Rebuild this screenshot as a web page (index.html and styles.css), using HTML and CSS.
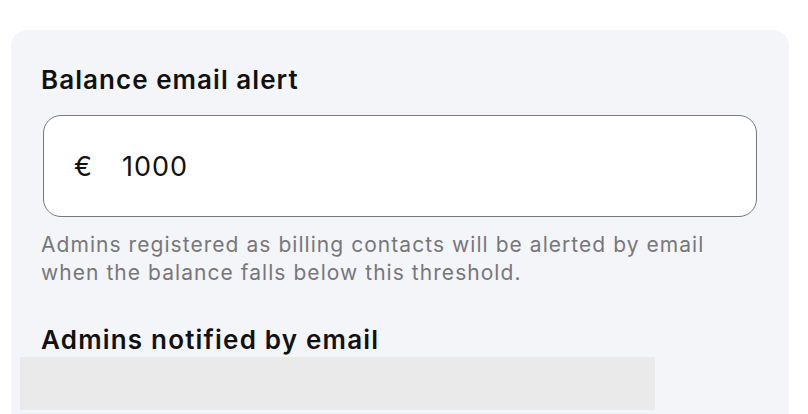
FILE: index.html
```html
<!DOCTYPE html>
<html lang="en">
<head>
<meta charset="utf-8">
<link rel="stylesheet" href="styles.css">
<title>Balance email alert</title>
</head>
<body>
  <section class="card">
    <h2 class="title">Balance email alert</h2>
    <div class="field">
      <span class="currency">€</span>
      <span class="amount">1000</span>
    </div>
    <p class="help">Admins registered as billing contacts will be alerted by email<br>when the balance falls below this threshold.</p>
    <h2 class="title title-admins">Admins notified by email</h2>
    <div class="placeholder"></div>
  </section>
</body>
</html>
```

FILE: styles.css
```css
html, body {
  margin: 0;
  padding: 0;
  background: #ffffff;
  font-family: Inter, "Noto Sans", sans-serif;
  overflow: hidden;
}

.card {
  margin: 30px 0 0 11px;
  width: 778px;
  height: 384px;
  box-sizing: border-box;
  background: #f4f5f9;
  border-radius: 16px 16px 0 0;
  padding: 34px 0 0 30px;
}

.title {
  margin: 0;
  font-size: 26px;
  line-height: 32px;
  font-weight: 600;
  color: #111111;
  letter-spacing: 1.05px;
}

.field {
  margin: 19px 0 0 2px;
  width: 714px;
  height: 102px;
  box-sizing: border-box;
  border: 1px solid #77777c;
  border-radius: 18px;
  background: #ffffff;
  display: flex;
  align-items: center;
  padding: 0 0 0 30px;
  font-size: 27px;
  color: #111111;
  letter-spacing: 1px;
}

.currency {
  width: 48px;
}

.help {
  margin: 14px 0 0 0;
  font-size: 21px;
  line-height: 28px;
  color: #77777a;
  letter-spacing: 1.05px;
}

.title-admins {
  margin-top: 38px;
  line-height: 30px;
  letter-spacing: 1.2px;
}

.placeholder {
  margin: 2px 0 0 -21px;
  width: 635px;
  height: 53px;
  background: #eaeaea;
}
```
